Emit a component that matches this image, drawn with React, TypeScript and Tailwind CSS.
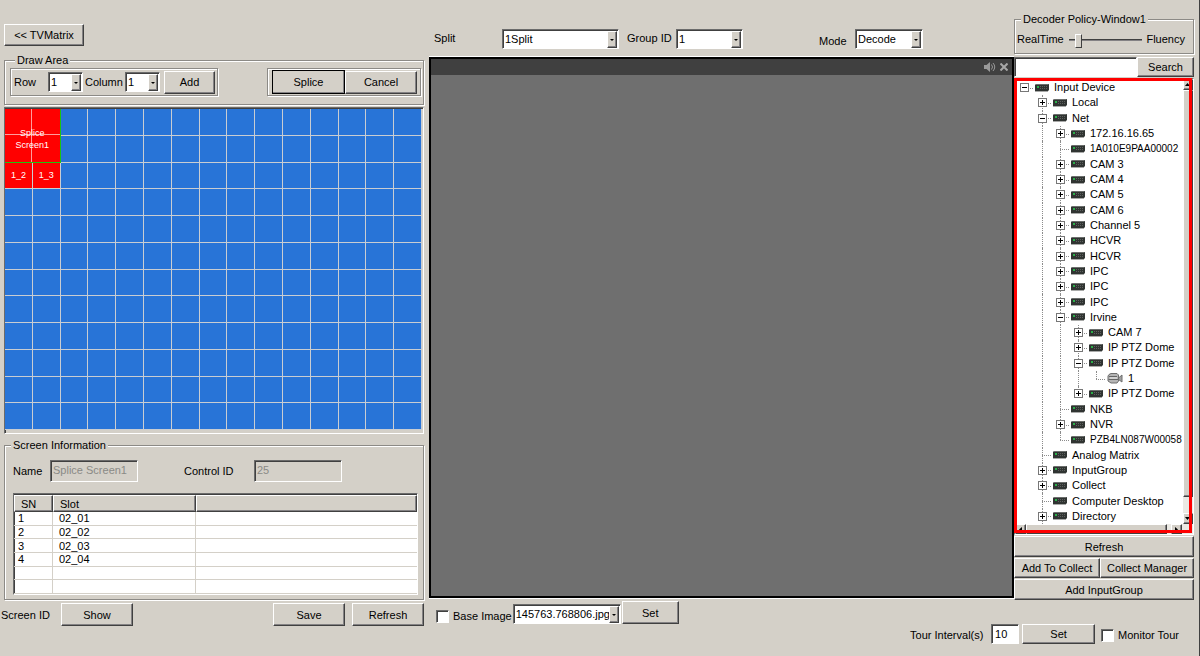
import { useState } from "react";
import type { ReactNode } from "react";
import clsx from "clsx";

const RAISED =
  "border border-t-white border-l-white border-r-[#404040] border-b-[#404040] bg-[#d4d0c8] shadow-[inset_-1px_-1px_0_#848284]";
const SUNKEN =
  "border border-t-[#6b6b6b] border-l-[#6b6b6b] border-r-white border-b-white shadow-[inset_1px_1px_0_#404040]";
const ETCHED = "border border-[#8c8a86] shadow-[1px_1px_0_#fff,inset_1px_1px_0_#fff]";

type TreeNode = {
  label: string;
  open?: boolean;
  leaf?: boolean;
  camera?: boolean;
  more?: boolean;
  children?: TreeNode[];
};

const devices: TreeNode = {
  label: "Input Device",
  open: true,
  children: [
    { label: "Local" },
    {
      label: "Net",
      open: true,
      children: [
        { label: "172.16.16.65" },
        { label: "1A010E9PAA00002", leaf: true },
        { label: "CAM 3" },
        { label: "CAM 4" },
        { label: "CAM 5" },
        { label: "CAM 6" },
        { label: "Channel 5" },
        { label: "HCVR" },
        { label: "HCVR" },
        { label: "IPC" },
        { label: "IPC" },
        { label: "IPC" },
        {
          label: "Irvine",
          open: true,
          children: [
            { label: "CAM 7" },
            { label: "IP PTZ Dome" },
            {
              label: "IP PTZ Dome",
              open: true,
              children: [{ label: "1", leaf: true, camera: true }],
            },
            { label: "IP PTZ Dome" },
          ],
        },
        { label: "NKB", leaf: true },
        { label: "NVR" },
        { label: "PZB4LN087W00058", leaf: true },
      ],
    },
    { label: "Analog Matrix", leaf: true },
    { label: "InputGroup" },
    { label: "Collect" },
    { label: "Computer Desktop", leaf: true },
    { label: "Directory", more: true },
  ],
};

const slots = ["02_01", "02_02", "02_03", "02_04"];

const COLS = 15;
const ROWS = 12;

function Button({
  children,
  className,
  onClick,
}: {
  children: ReactNode;
  className?: string;
  onClick?: () => void;
}) {
  return (
    <button type="button" onClick={onClick} className={clsx("whitespace-nowrap text-center", RAISED, className)}>
      {children}
    </button>
  );
}

function Combo({
  id,
  options,
  label,
  className,
}: {
  id: string;
  options: string[];
  label?: string;
  className?: string;
}) {
  return (
    <div className={clsx("relative h-5 shrink-0 bg-white", SUNKEN, className)}>
      <select
        id={id}
        aria-label={label}
        className="h-full w-full appearance-none bg-transparent pr-[11px] pl-0.5 text-[11px] leading-4 outline-none"
      >
        {options.map((o) => (
          <option key={o}>{o}</option>
        ))}
      </select>
      <span
        className={clsx(
          "pointer-events-none absolute top-px right-px bottom-0 flex w-[10px] items-center justify-center",
          RAISED
        )}
      >
        <svg width="4" height="2" viewBox="0 0 4 2">
          <path d="M0 0h4L2 2z" fill="#000" />
        </svg>
      </span>
    </div>
  );
}

function DeviceIcon() {
  return (
    <svg width="14" height="8" viewBox="0 0 14 8" className="shrink-0">
      <path d="M1 0h13v6l-1 1H0V1z" fill="#303432" />
      <path d="M1 .5h12.500" stroke="#6b6e6c" strokeWidth="1" />
      <path d="M5 2.500h8M5 4.500h8" stroke="#5d605e" strokeWidth="1" strokeDasharray="1 1" />
      <path d="M0 7.500h13" stroke="#a9aaa9" strokeWidth="1" />
      <rect x="2" y="2" width="2" height="2" fill="#2bb04a" />
    </svg>
  );
}

function CameraIcon() {
  return (
    <svg width="16" height="11" viewBox="0 0 16 11" className="shrink-0">
      <path d="M2 1.500 4 .5h6l1.500 1.500v6L10 10H4L1 8V3z" fill="#b5b5b5" stroke="#6e6e6e" />
      <path d="M2 3.500h8M1.500 6.500H11" stroke="#666" />
      <path d="M3 5h7" stroke="#eee" />
      <path d="M11.500 5 15 2v7l-3.500-2.500z" fill="#a0a0a0" stroke="#6e6e6e" />
    </svg>
  );
}

// guides holds one flag per ancestor: true when its vertical line goes on below
function TreeRow({ node, guides, last }: { node: TreeNode; guides: boolean[]; last: boolean }) {
  const root = guides.length === 0;
  return (
    <>
      <li
        role="treeitem"
        aria-expanded={node.leaf ? undefined : !!node.open}
        className="flex min-h-[15px] flex-1 items-stretch"
      >
        {guides.map((line, i) => (
          <span key={i} className="flex w-[18px] shrink-0 pl-[9px]">
            {line && <span className="border-l border-dotted border-[#8c8c8c]" />}
          </span>
        ))}
        <span className="relative flex w-[18px] shrink-0 items-center justify-center">
          {!root && (
            <span
              className={clsx(
                "absolute top-0 left-[9px] border-l border-dotted border-[#8c8c8c]",
                last ? "h-1/2" : "h-full"
              )}
            />
          )}
          <span className="absolute top-1/2 right-0 left-[9px] border-t border-dotted border-[#8c8c8c]" />
          {!node.leaf && (
            <svg width="9" height="9" viewBox="0 0 9 9" className="relative">
              <rect x=".5" y=".5" width="8" height="8" fill="#fff" stroke="#777" />
              <path d={node.open ? "M2 4.500h5" : "M2 4.500h5M4.500 2v5"} stroke="#000" />
            </svg>
          )}
        </span>
        <span className="flex items-center gap-[5px] pl-0.5 whitespace-nowrap">
          {node.camera ? <CameraIcon /> : <DeviceIcon />}
          {/* serial numbers are set smaller so that they fit the column */}
          <span className={clsx(node.label.length > 14 && !node.label.includes(" ") && "text-[10px]")}>
            {node.label}
          </span>
        </span>
      </li>
      {node.open &&
        node.children?.map((child, i) => {
          const isLast = i === node.children!.length - 1 && !child.more;
          return <TreeRow key={i} node={child} guides={[...guides, !last]} last={isLast} />;
        })}
    </>
  );
}

function ScreenGrid() {
  const cell = "border-r border-b border-[#c9cdd2]";
  return (
    <div className="grid h-full grid-cols-15 grid-rows-12 bg-[#2874d7]">
      <div className="relative col-span-2 col-start-1 row-span-2 row-start-1 grid grid-cols-2 grid-rows-2 border-r border-b border-[#1fc40f] bg-[#f00]">
        <span className="border-r border-b border-[#ff9c9c]" />
        <span className="border-b border-[#ff9c9c]" />
        <span className="border-r border-[#ff9c9c]" />
        <span />
        <span className="absolute inset-0 flex items-center justify-center pt-2 text-center text-[9px] leading-3 text-white">
          Splice
          <br />
          Screen1
        </span>
      </div>
      {Array.from({ length: COLS * ROWS - 4 }, (_, i) => {
        // the first two rows each lose two cells to the spliced screen
        const label = i === 26 ? "1_2" : i === 27 ? "1_3" : "";
        return (
          <div
            key={i}
            className={clsx(cell, label && "flex items-center justify-center bg-[#f00] text-[9px] text-white")}
          >
            {label}
          </div>
        );
      })}
    </div>
  );
}

function LeftPanel() {
  return (
    <section className="flex w-[429px] shrink-0 flex-col pt-6 pr-[5px] pb-[30px] pl-1">
      <Button className="h-[22px] w-20 shrink-0">&lt;&lt; TVMatrix</Button>

      <fieldset className={clsx("mt-[7px] flex justify-between pr-0.5 pb-2 pl-[5px]", ETCHED)}>
        <legend className="ml-[5px] bg-[#d4d0c8] px-0.5 leading-[14px]">Draw Area</legend>
        <div className={clsx("mt-px flex h-7 items-center pr-0.5 pl-[3px]", ETCHED)}>
          <label htmlFor="row" className="w-[34px]">
            Row
          </label>
          <Combo id="row" options={["1", "2", "3", "4"]} className="w-[35px]" />
          <label htmlFor="column" className="ml-0.5 w-10">
            Column
          </label>
          <Combo id="column" options={["1", "2", "3", "4"]} className="w-[35px]" />
          <Button className="ml-1 h-[23px] w-[51px]">Add</Button>
        </div>
        <div className={clsx("mt-px flex h-7 items-center pr-[3px] pl-1", ETCHED)}>
          <Button className="h-6 w-[73px] outline outline-black -outline-offset-1">Splice</Button>
          <Button className="h-[23px] w-[72px]">Cancel</Button>
        </div>
      </fieldset>

      <div className={clsx("mt-0.5 min-h-[300px] flex-1 pt-px pr-px pb-[3px]", SUNKEN)}>
        <ScreenGrid />
      </div>

      <fieldset className={clsx("mt-1 px-2 pb-1", ETCHED)}>
        <legend className="-ml-0.5 bg-[#d4d0c8] px-0.5 leading-[14px]">Screen Information</legend>
        <div className="mt-2 flex items-center">
          <label htmlFor="name" className="w-[37px]">
            Name
          </label>
          <input
            id="name"
            disabled
            defaultValue="Splice Screen1"
            className={clsx("h-[22px] w-[88px] pb-0.5 pl-0.5 text-[#8a8a86]", SUNKEN)}
          />
          <label htmlFor="control" className="ml-[46px] w-[70px]">
            Control ID
          </label>
          <input
            id="control"
            disabled
            defaultValue="25"
            className={clsx("h-[22px] w-[88px] pb-0.5 pl-0.5 text-[#8a8a86]", SUNKEN)}
          />
        </div>
        <div className={clsx("mt-[11px] mr-[-3px] bg-white pt-px", SUNKEN)}>
          <table className="h-[99px] w-full table-fixed border-separate border-spacing-0 text-left leading-3">
            <thead>
              <tr className="h-[17px]">
                <th className={clsx("w-[39px] pl-1.5 font-normal", RAISED)}>SN</th>
                <th className={clsx("w-[143px] pl-1.5 font-normal", RAISED)}>Slot</th>
                <th className={clsx("font-normal", RAISED)} />
              </tr>
            </thead>
            <tbody>
              {Array.from({ length: 6 }, (_, i) => (
                <tr key={i} className="h-[13px]">
                  <td className="border-r border-b border-[#d4d0c8] pl-1">{slots[i] ? i + 1 : ""}</td>
                  <td className="border-r border-b border-[#d4d0c8] pl-1.5">{slots[i]}</td>
                  <td className="border-b border-[#d4d0c8]" />
                </tr>
              ))}
            </tbody>
          </table>
        </div>
      </fieldset>

      <div className="-ml-[3px] flex items-center pt-[3px]">
        <span className="w-[60px]">Screen ID</span>
        <Button className="h-[23px] w-[72px]">Show</Button>
        <Button className="ml-auto h-[23px] w-[72px]">Save</Button>
        <Button className="ml-[7px] h-[23px] w-[72px]">Refresh</Button>
      </div>
    </section>
  );
}

function VideoPanel() {
  return (
    <section className="flex min-w-0 flex-1 flex-col">
      <div className="flex h-[57px] items-end pb-2 pl-[5px] whitespace-nowrap">
        <label htmlFor="split" className="mb-[3px] w-[68px]">
          Split
        </label>
        <Combo id="split" options={["1Split", "4Split", "9Split"]} className="w-[117px]" />
        <label htmlFor="group" className="mb-[3px] ml-2 w-[49px]">
          Group ID
        </label>
        <Combo id="group" options={["1", "2", "3"]} className="w-[67px]" />
        <label htmlFor="mode" className="ml-[76px] w-9">
          Mode
        </label>
        <Combo id="mode" options={["Decode", "Tour"]} className="w-[68px]" />
      </div>

      <div className="flex flex-1 flex-col border-2 border-black bg-[#6f6f6f] shadow-[0_-1px_0_#fff,0_1px_0_#fff]">
        <div className="flex h-4 items-center justify-end gap-1 bg-[#404040] pr-1">
          <button type="button" aria-label="Sound">
            <svg width="12" height="10" viewBox="0 0 12 10">
              <path d="M0 3h2.500L6 0v10L2.500 7H0z" fill="#9a9a9a" />
              <path d="M7.500 2.500q2 2.500 0 5M9 1q3.500 4 0 8" fill="none" stroke="#9a9a9a" />
            </svg>
          </button>
          <button type="button" aria-label="Close">
            <svg width="8" height="8" viewBox="0 0 8 8">
              <path d="M.5.5l7 7M7.500.5l-7 7" stroke="#a8a8a8" strokeWidth="2" />
            </svg>
          </button>
        </div>
      </div>

      <div className="flex h-[26px] items-end pl-[7px] whitespace-nowrap">
        <label className="flex items-center gap-1">
          <input
            type="checkbox"
            className={clsx("h-[13px] w-[13px] appearance-none bg-white checked:bg-[#404040]", SUNKEN)}
          />
          Base Image
        </label>
        <Combo id="image" label="Image file" options={["145763.768806.jpg"]} className="ml-px w-[108px]" />
        <Button className="ml-px h-[23px] w-[57px]">Set</Button>
      </div>
    </section>
  );
}

function Arrow({ d }: { d: string }) {
  return (
    <svg width="5" height="5" viewBox="0 0 5 5" className="shrink-0">
      <path d={d} fill="#000" />
    </svg>
  );
}

function DevicePanel() {
  const [search, setSearch] = useState("");
  const [policy, setPolicy] = useState(10);

  return (
    <section className="flex w-[185px] shrink-0 flex-col pt-3 pr-[5px] pb-6">
      <fieldset className={clsx("flex h-[42px] items-start justify-between pr-2 pl-0.5", ETCHED)}>
        <legend className="ml-1 bg-[#d4d0c8] px-0.5 leading-[14px]">Decoder Policy-Window1</legend>
        <label htmlFor="policy" className="mt-1.5 leading-[14px]">
          RealTime
        </label>
        <input
          id="policy"
          type="range"
          value={policy}
          onChange={(e) => setPolicy(Number(e.target.value))}
          className="mt-1.5 h-4 w-[73px] appearance-none bg-transparent [&::-webkit-slider-runnable-track]:h-0.5 [&::-webkit-slider-runnable-track]:border-t [&::-webkit-slider-runnable-track]:border-b [&::-webkit-slider-runnable-track]:border-t-[#404040] [&::-webkit-slider-runnable-track]:border-b-[#848284] [&::-webkit-slider-thumb]:-mt-1.5 [&::-webkit-slider-thumb]:h-[14px] [&::-webkit-slider-thumb]:w-[7px] [&::-webkit-slider-thumb]:appearance-none [&::-webkit-slider-thumb]:border [&::-webkit-slider-thumb]:border-t-white [&::-webkit-slider-thumb]:border-r-[#404040] [&::-webkit-slider-thumb]:border-b-[#404040] [&::-webkit-slider-thumb]:border-l-white [&::-webkit-slider-thumb]:bg-[#d4d0c8]"
        />
        <span className="mt-1.5 leading-[14px]">Fluency</span>
      </fieldset>

      <div className="mt-[3px] flex">
        <input
          aria-label="Search devices"
          value={search}
          onChange={(e) => setSearch(e.target.value)}
          className={clsx("h-5 min-w-0 flex-1 bg-white px-1 outline-none", SUNKEN)}
        />
        <Button className="h-5 w-[57px]">Search</Button>
      </div>

      <div className={clsx("relative mt-px flex flex-1 flex-col bg-white", SUNKEN)}>
        <div className="flex min-h-0 flex-1">
          <ul role="tree" className="flex min-w-0 flex-1 flex-col overflow-hidden pt-px leading-[15px]">
            <TreeRow node={devices} guides={[]} last />
          </ul>
          <div className="flex w-[10px] flex-col bg-[#ebe9e4]">
            <span className={clsx("flex h-[11px] items-center pl-px", RAISED)}>
              <Arrow d="M0 4h5L2.500 1z" />
            </span>
            <span className={clsx("flex-1", RAISED)} />
            <span className={clsx("mt-4 flex h-[11px] items-center pl-px", RAISED)}>
              <Arrow d="M0 1h5L2.500 4z" />
            </span>
          </div>
        </div>
        <div className="flex h-[10px] bg-[#ebe9e4] pr-[11px]">
          <span className={clsx("flex w-[11px] items-center justify-center", RAISED)}>
            <Arrow d="M4 0v5L1 2.500z" />
          </span>
          <span className={clsx("flex-1", RAISED)} />
          <span className={clsx("ml-1 flex w-[11px] items-center justify-center", RAISED)}>
            <Arrow d="M1 0v5l3-2.500z" />
          </span>
        </div>
        <div className="pointer-events-none absolute -top-px right-px bottom-px -left-px border-[3px] border-[#f00]" />
      </div>

      <div className="mt-px grid grid-cols-[86fr_94fr] gap-y-px">
        <Button className="col-span-2 h-[21px]">Refresh</Button>
        <Button className="h-5">Add To Collect</Button>
        <Button className="h-5">Collect Manager</Button>
        <Button className="col-span-2 h-[21px]">Add InputGroup</Button>
      </div>
    </section>
  );
}

export default function App() {
  return (
    <main className="flex min-h-screen border-r border-[#404040] bg-[#d4d0c8] font-['Liberation_Sans',Arial,sans-serif] text-[11px] leading-4 text-black">
      <LeftPanel />
      <div className="flex min-w-0 flex-1 flex-col">
        <div className="flex flex-1">
          <VideoPanel />
          <DevicePanel />
        </div>
        <div className="flex h-8 items-start justify-end pr-5 whitespace-nowrap">
          <label htmlFor="interval" className="mt-[3px] w-[81px]">
            Tour Interval(s)
          </label>
          <input
            id="interval"
            defaultValue="10"
            className={clsx("h-5 w-7 bg-white pl-[3px] outline-none", SUNKEN)}
          />
          <Button className="ml-[3px] h-5 w-[73px]">Set</Button>
          <label className="mt-[3px] ml-1.5 flex items-center gap-1">
            <input
              type="checkbox"
              className={clsx("h-[13px] w-[13px] appearance-none bg-white checked:bg-[#404040]", SUNKEN)}
            />
            Monitor Tour
          </label>
        </div>
      </div>
    </main>
  );
}
